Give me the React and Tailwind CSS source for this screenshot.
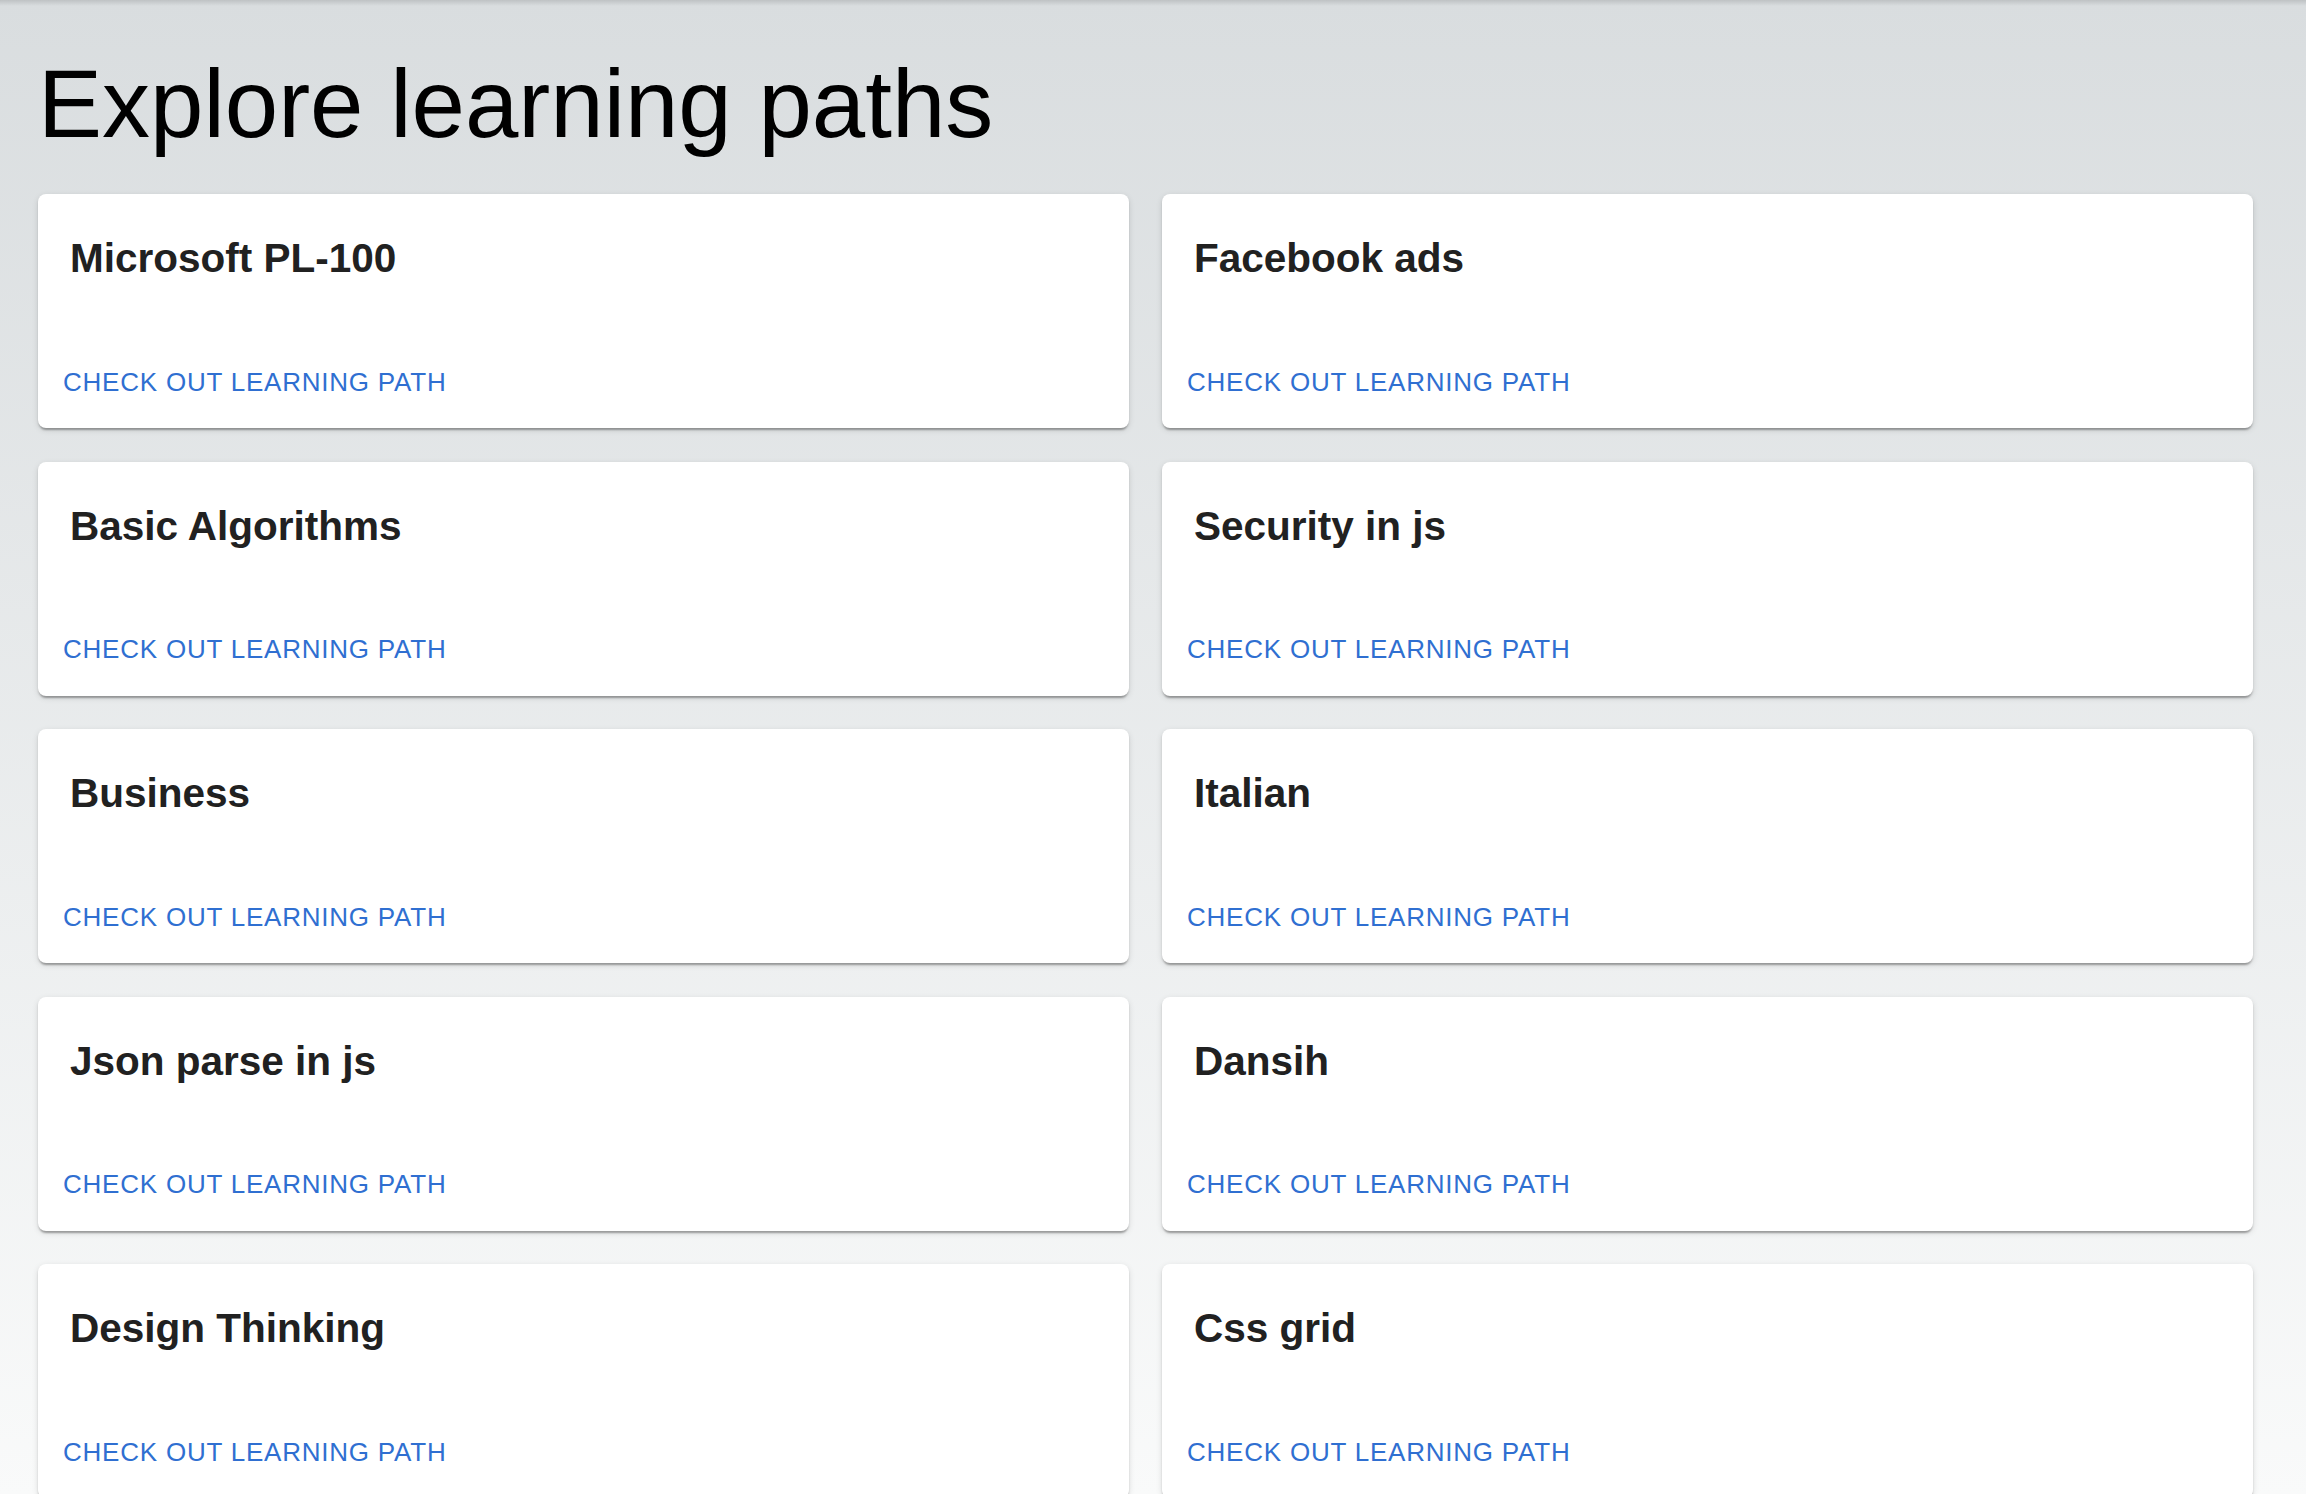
const paths = [
  "Microsoft PL-100",
  "Facebook ads",
  "Basic Algorithms",
  "Security in js",
  "Business",
  "Italian",
  "Json parse in js",
  "Dansih",
  "Design Thinking",
  "Css grid",
];

const PathCard = ({ title }) => (
  <div className="flex h-[234px] flex-col justify-between rounded-[8px] bg-white shadow-[0_4px_2px_-2px_rgba(0,0,0,0.2),0_2px_2px_0_rgba(0,0,0,0.14),0_2px_6px_0_rgba(0,0,0,0.12)]">
    <h6 className="px-[32px] pt-[32px] text-[40.5px] font-bold leading-[64px] text-[#212121]">
      {title}
    </h6>
    <div className="px-[25px] pb-[23px]">
      <button
        type="button"
        className="text-[26px] uppercase leading-[45.5px] tracking-[0.03em] text-[#2f6fd1]"
      >
        Check out learning path
      </button>
    </div>
  </div>
);

export default function App() {
  return (
    <div className="relative h-[1494px] overflow-hidden bg-gradient-to-b from-[#d9dddf] to-[#f9fafa] font-['Liberation_Sans',Arial,sans-serif]">
      <div className="absolute inset-x-0 top-0 h-[6px] bg-gradient-to-b from-[rgba(0,0,0,0.12)] to-transparent" />
      <div className="pl-[38px] pr-[53px] pt-[48px]">
        <h3 className="mb-[34px] text-[96px] font-normal leading-[112px] text-black">
          Explore learning paths
        </h3>
        <div className="grid grid-cols-2 gap-x-[33px] gap-y-[33.5px]">
          {paths.map((title) => (
            <PathCard key={title} title={title} />
          ))}
        </div>
      </div>
    </div>
  );
}
